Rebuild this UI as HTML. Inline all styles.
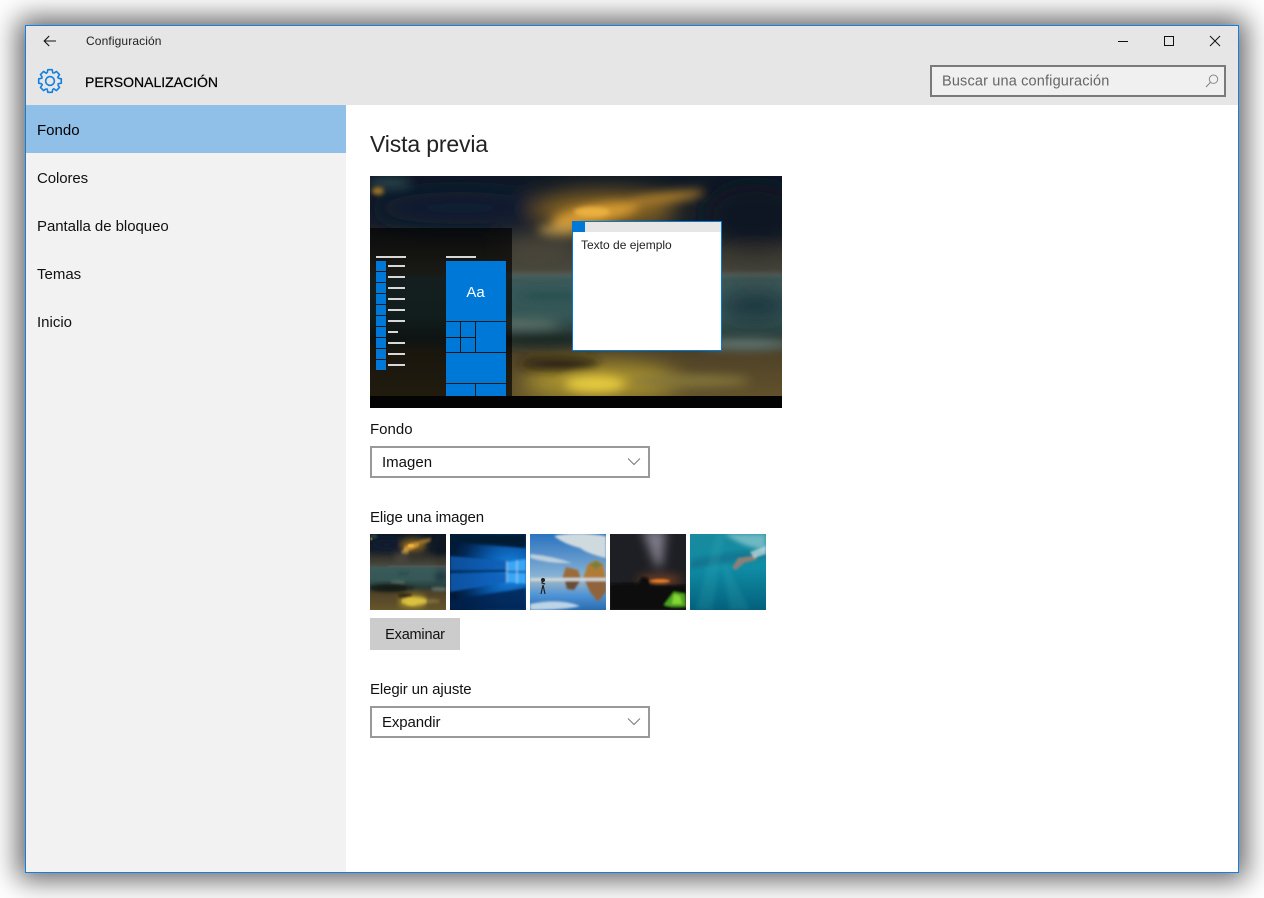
<!DOCTYPE html>
<html lang="es"><head><meta charset="utf-8"><title>Configuración</title>
<style>
html,body{margin:0;padding:0;background:#fff;width:1264px;height:898px;overflow:hidden}
body{position:relative;font-family:"Liberation Sans",sans-serif;color:#111}
.a{position:absolute}
.t{position:absolute;white-space:nowrap;font-size:15px;line-height:20px;color:#111}
.win{left:25px;top:25px;width:1212px;height:846px;border:1px solid #1180e0;background:#fff;box-shadow:0 0 26px 7px rgba(0,0,0,.62)}
.sel{left:370px;width:276px;height:28px;border:2px solid #999;background:#fff}
svg{position:absolute;display:block}
</style></head><body>
<svg width="0" height="0" style="position:absolute"><defs>
<filter id="b1" x="-30%" y="-30%" width="160%" height="160%"><feGaussianBlur stdDeviation="2"/></filter>
<filter id="b2" x="-40%" y="-60%" width="180%" height="220%"><feGaussianBlur stdDeviation="5"/></filter>
<filter id="b3" x="-40%" y="-60%" width="180%" height="220%"><feGaussianBlur stdDeviation="11"/></filter>
<filter id="bt" x="-20%" y="-20%" width="140%" height="140%"><feGaussianBlur stdDeviation="1"/></filter>
<linearGradient id="sky" x1="0" y1="0" x2="0" y2="1"><stop offset="0" stop-color="#0f1825"/><stop offset=".2" stop-color="#161d28"/><stop offset=".32" stop-color="#37362f"/><stop offset=".42" stop-color="#4b4b40"/><stop offset=".435" stop-color="#3c5a5a"/><stop offset=".6" stop-color="#355756"/><stop offset=".7" stop-color="#2a3b38"/><stop offset=".77" stop-color="#4f4228"/><stop offset="1" stop-color="#66562c"/></linearGradient>
<g id="scene">
<rect width="412" height="232" fill="url(#sky)"/>
<g filter="url(#b3)">
<ellipse cx="385" cy="40" rx="50" ry="32" fill="#091323"/>
<ellipse cx="90" cy="32" rx="85" ry="16" fill="#0f1a30"/>
<ellipse cx="235" cy="34" rx="72" ry="18" fill="#8a6622"/>
<ellipse cx="230" cy="205" rx="78" ry="18" fill="#ad962f"/>
<ellipse cx="385" cy="130" rx="35" ry="14" fill="#1b363e"/>
<ellipse cx="385" cy="85" rx="40" ry="10" fill="#3e3a30"/>
<ellipse cx="170" cy="75" rx="40" ry="12" fill="#4d4a3c"/>
</g>
<g filter="url(#b2)">
<ellipse cx="20" cy="7" rx="22" ry="5" fill="#2b4a50"/>
<ellipse cx="225" cy="38" rx="44" ry="9" fill="#d69a32" transform="rotate(-10 225 38)"/>
<ellipse cx="295" cy="22" rx="40" ry="5" fill="#b4822c" transform="rotate(-8 295 22)"/>
<ellipse cx="190" cy="54" rx="22" ry="5" fill="#b3924a"/>
<ellipse cx="180" cy="120" rx="34" ry="3" fill="#1f4a4a"/>
<ellipse cx="150" cy="148" rx="40" ry="4" fill="#66786e"/>
<ellipse cx="180" cy="164" rx="60" ry="6" fill="#1a2824"/>
<ellipse cx="375" cy="168" rx="45" ry="5" fill="#667c74"/>
<ellipse cx="190" cy="188" rx="40" ry="6" fill="#231b0c"/>
<ellipse cx="225" cy="208" rx="30" ry="8" fill="#e6cb40"/>
<ellipse cx="320" cy="205" rx="60" ry="6" fill="#84763a"/>
</g>
<g filter="url(#b1)">
<ellipse cx="222" cy="36" rx="18" ry="5" fill="#eab040"/>
<ellipse cx="250" cy="50" rx="8" ry="3" fill="#5a4a22"/>
<ellipse cx="8" cy="15" rx="6" ry="4" fill="#9a7228"/>
<rect x="100" y="97" width="312" height="3" fill="#5c7272" opacity=".55"/>
</g>
</g>
</defs></svg>

<div class="a win"></div>
<div class="a" style="left:26px;top:26px;width:1212px;height:79px;background:#e6e6e6"></div>
<div class="a" style="left:26px;top:105px;width:320px;height:767px;background:#f2f2f2"></div>
<div class="a" style="left:26px;top:105px;width:320px;height:48px;background:#90c0e8"></div>

<svg style="left:43px;top:34px" width="14" height="14" viewBox="0 0 14 14"><path d="M1.500 7H13M6.200 2L1.200 7l5 5" fill="none" stroke="#111" stroke-width="1.100"/></svg>
<div class="t" style="left:86px;top:31px;font-size:12px;letter-spacing:.12px;color:#222">Configuración</div>

<svg style="left:37px;top:68px" width="26" height="26" viewBox="-13 -13 26 26"><g fill="none" stroke="#1280dc" stroke-width="1.600" stroke-linejoin="round">
<path id="g0" d="M8.130-2.800L11.290-2.190V2.190L8.130 2.800A8.600 8.600 0 0 1 7.730 3.770"/>
<use href="#g0" transform="rotate(45)"/><use href="#g0" transform="rotate(90)"/><use href="#g0" transform="rotate(135)"/><use href="#g0" transform="rotate(180)"/><use href="#g0" transform="rotate(225)"/><use href="#g0" transform="rotate(270)"/><use href="#g0" transform="rotate(315)"/>
<circle r="4.400"/></g></svg>
<div class="t" style="left:85px;top:72px;font-size:14px;letter-spacing:0;-webkit-text-stroke:.25px #000;color:#000">PERSONALIZACIÓN</div>

<svg style="left:1117px;top:34px" width="110" height="14" viewBox="0 0 110 14"><path d="M1 7.500H11" stroke="#111" stroke-width="1"/><rect x="47.500" y="2.500" width="9" height="9" fill="none" stroke="#111"/><path d="M93 2L103 12M103 2L93 12" stroke="#111" stroke-width="1"/></svg>

<div class="a" style="left:930px;top:65px;width:292px;height:28px;border:2px solid #7a7a7a;background:#f0f0f0"></div>
<div class="t" style="left:942px;top:71px;font-size:14.5px;letter-spacing:.16px;color:#666;transform:translateY(.6px)">Buscar una configuración</div>
<svg style="left:1205px;top:74px" width="14" height="14" viewBox="0 0 14 14"><circle cx="8.500" cy="5.200" r="4.200" fill="none" stroke="#888" stroke-width="1"/><path d="M5.500 8.200L1 13" stroke="#888" stroke-width="1.100"/></svg>

<div class="t" style="left:37px;top:121px;color:#000">Fondo</div>
<div class="t" style="left:37px;top:169px;letter-spacing:-.1px">Colores</div>
<div class="t" style="left:37px;top:217px;letter-spacing:-.05px">Pantalla de bloqueo</div>
<div class="t" style="left:37px;top:265px">Temas</div>
<div class="t" style="left:37px;top:313px">Inicio</div>

<div class="t" style="left:370px;top:130px;font-size:23px;line-height:28px;letter-spacing:-.15px;color:#222">Vista previa</div>

<!-- preview -->
<svg style="left:370px;top:176px" width="412" height="232" viewBox="0 0 412 232"><use href="#scene"/>
<rect x="0" y="52" width="142" height="168" fill="#000" opacity=".66"/>
<rect x="0" y="220" width="412" height="12" fill="#040404"/>
<g fill="#0078d7">
<rect x="6" y="85" width="10" height="10"/><rect x="6" y="96" width="10" height="10"/><rect x="6" y="107" width="10" height="10"/><rect x="6" y="118" width="10" height="10"/><rect x="6" y="129" width="10" height="10"/><rect x="6" y="140" width="10" height="10"/><rect x="6" y="151" width="10" height="10"/><rect x="6" y="162" width="10" height="10"/><rect x="6" y="173" width="10" height="10"/><rect x="6" y="184" width="10" height="10"/>
<rect x="76" y="85" width="60" height="60"/>
<rect x="76" y="146" width="14" height="15"/><rect x="91" y="146" width="14" height="15"/><rect x="76" y="162" width="14" height="14"/><rect x="91" y="162" width="14" height="14"/>
<rect x="106" y="146" width="30" height="30"/>
<rect x="76" y="177" width="60" height="30"/>
<rect x="76" y="208" width="29" height="12"/><rect x="106" y="208" width="30" height="12"/>
</g>
<g fill="#d8d8d8">
<rect x="6" y="80" width="30" height="2"/><rect x="76" y="80" width="30" height="2"/>
<rect x="18" y="89" width="17" height="2"/><rect x="18" y="100" width="17" height="2"/><rect x="18" y="111" width="17" height="2"/><rect x="18" y="122" width="17" height="2"/><rect x="18" y="133" width="17" height="2"/><rect x="18" y="144" width="17" height="2"/><rect x="18" y="155" width="10" height="2"/><rect x="18" y="166" width="17" height="2"/><rect x="18" y="177" width="17" height="2"/><rect x="18" y="188" width="17" height="2"/>
</g>
<text x="105.500" y="121" text-anchor="middle" font-family="Liberation Sans" font-size="15" fill="#fff">Aa</text>
<rect x="202.500" y="45.500" width="149" height="129" fill="#fff" stroke="#0078d7"/>
<rect x="203" y="46" width="148" height="10" fill="#e6e6e6"/>
<rect x="203" y="46" width="12" height="10" fill="#0078d7"/>
<text x="211" y="73" font-family="Liberation Sans" font-size="12" fill="#222">Texto de ejemplo</text>
</svg>

<div class="t" style="left:370px;top:420px">Fondo</div>
<div class="a sel" style="top:446px"></div>
<div class="t" style="left:382px;top:453px">Imagen</div>
<svg style="left:627px;top:457px" width="14" height="9" viewBox="0 0 14 9"><path d="M1 1.500L7 7.500L13 1.500" fill="none" stroke="#777" stroke-width="1"/></svg>

<div class="t" style="left:370px;top:508px;letter-spacing:-.12px">Elige una imagen</div>

<!-- thumbs -->
<svg style="left:370px;top:534px" width="76" height="76" viewBox="0 0 412 232" preserveAspectRatio="none"><use href="#scene"/><ellipse cx="100" cy="165" rx="100" ry="12" fill="#151a14" filter="url(#b2)"/><ellipse cx="240" cy="205" rx="70" ry="12" fill="#dcc040" filter="url(#b2)"/></svg>

<svg style="left:450px;top:534px" width="76" height="76" viewBox="0 0 76 76">
<defs><radialGradient id="w1" cx=".8" cy=".5" r=".8"><stop offset="0" stop-color="#1a8fee"/><stop offset=".45" stop-color="#0958a8"/><stop offset=".8" stop-color="#022a58"/><stop offset="1" stop-color="#011a38"/></radialGradient></defs>
<rect width="76" height="76" fill="url(#w1)"/>
<g filter="url(#bt)">
<path d="M0 0H76V14L0 8Z" fill="#011a36"/>
<path d="M0 22L60 27V36H0Z" fill="#0b5db4" opacity=".8"/>
<path d="M0 36H76V38H0Z" fill="#02305f"/>
<path d="M0 39H60V48L0 58Z" fill="#0c60bc" opacity=".8"/>
<path d="M0 66L76 54V76H0Z" fill="#01224c" opacity=".8"/>
<path d="M57 28L76 25V37H57ZM57 39H76V50L57 48Z" fill="#3aa6f4"/>
<path d="M57 27V49M67 26V50" stroke="#b0dcfb" stroke-width=".8" fill="none"/>
</g></svg>

<svg style="left:530px;top:534px" width="76" height="76" viewBox="0 0 76 76">
<defs><linearGradient id="b3s" x1="0" y1="0" x2="0" y2="1"><stop offset="0" stop-color="#2a72c0"/><stop offset="1" stop-color="#8fb8d6"/></linearGradient><linearGradient id="b3w" x1="0" y1="0" x2="0" y2="1"><stop offset="0" stop-color="#a0b6c4"/><stop offset=".5" stop-color="#4f94d6"/><stop offset="1" stop-color="#2a6cb0"/></linearGradient></defs>
<rect width="76" height="46" fill="url(#b3s)"/><rect y="46" width="76" height="30" fill="url(#b3w)"/>
<g filter="url(#bt)">
<path d="M24 2Q45-3 76 2V24Q58 20 50 14Q34 10 24 2Z" fill="#cfdade"/>
<path d="M0 20Q22 22 42 29Q20 30 0 24Z" fill="#bdd0dc"/>
<path d="M32 45L36 33L48 36L51 45Z" fill="#9c6a38"/>
<path d="M53 45L58 30L66 26L73 30L76 45Z" fill="#b07c36"/>
<path d="M60 31L66 27L72 31L66 35Z" fill="#75803a"/>
<path d="M35 47L50 47L44 56L37 55Z" fill="#6b4c34"/>
<path d="M55 47H76V58L68 68L60 58Z" fill="#90643a"/>
<rect y="44" width="76" height="3" fill="#d0d8da"/>
<path d="M0 70Q30 64 50 72Q35 76 0 76Z" fill="#bcd4e6"/>
</g>
<path d="M13 44L12 49L15 50M13 51L11 60M13 51L15 60" stroke="#222" stroke-width="1.200" fill="none"/><circle cx="13" cy="46" r="2" fill="#222"/>
</svg>

<svg style="left:610px;top:534px" width="76" height="76" viewBox="0 0 76 76">
<rect width="76" height="76" fill="#1e1f24"/>
<g filter="url(#b2)"><path d="M32-4H56L52 32H46Z" fill="#7e7a88"/><ellipse cx="50" cy="46" rx="22" ry="4" fill="#8c4a20"/></g>
<g filter="url(#bt)"><ellipse cx="50" cy="47" rx="10" ry="2" fill="#e27c28"/>
<path d="M0 50Q25 48 28 50L32 43L38 44L40 51Q55 52 76 51V76H0Z" fill="#070707"/>
<path d="M54 71L64 58L75 60L76 72Q64 74 54 71Z" fill="#4fa620"/><path d="M64 60L70 62L72 70L62 70Z" fill="#86d636"/></g>
</svg>

<svg style="left:690px;top:534px" width="76" height="76" viewBox="0 0 76 76">
<defs><linearGradient id="u1" x1="0" y1="0" x2="0" y2="1"><stop offset="0" stop-color="#1a8a9e"/><stop offset=".45" stop-color="#0f8ca4"/><stop offset="1" stop-color="#04607c"/></linearGradient></defs>
<rect width="76" height="76" fill="url(#u1)"/>
<g filter="url(#b1)"><path d="M34 0H76V16Q60 14 48 8Z" fill="#7cc0c8" opacity=".85"/>
<path d="M0 26Q30 18 76 16V22Q40 28 0 36Z" fill="#0f6a86" opacity=".6"/>
<path d="M26 0L6 76H22L34 0ZM32 30L40 76H60L36 30Z" fill="#3bb0bc" opacity=".18"/></g>
<g filter="url(#bt)"><path d="M42 34L48 24L62 22L68 20L66 26L54 29L46 36Z" fill="#8a8078"/>
<path d="M60 18L76 12V20L64 24Z" fill="#cfe2e4" opacity=".7"/></g></svg>

<div class="a" style="left:370px;top:618px;width:90px;height:32px;background:#ccc"></div>
<div class="t" style="left:370px;top:625px;width:90px;text-align:center;font-size:14.5px;letter-spacing:-.2px;color:#111">Examinar</div>

<div class="t" style="left:370px;top:680px;letter-spacing:-.12px">Elegir un ajuste</div>
<div class="a sel" style="top:706px"></div>
<div class="t" style="left:382px;top:713px;letter-spacing:-.1px">Expandir</div>
<svg style="left:627px;top:717px" width="14" height="9" viewBox="0 0 14 9"><path d="M1 1.500L7 7.500L13 1.500" fill="none" stroke="#777" stroke-width="1"/></svg>
</body></html>
